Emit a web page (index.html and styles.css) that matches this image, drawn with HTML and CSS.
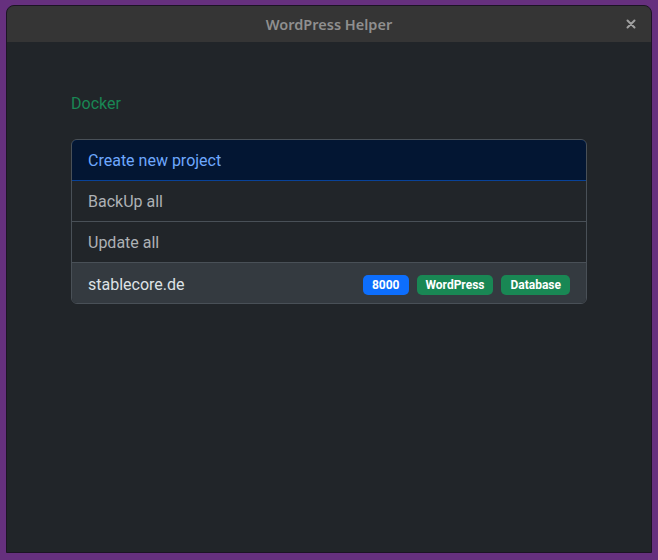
FILE: index.html
```html
<!DOCTYPE html>
<html>
<head>
<meta charset="utf-8">
<link rel="stylesheet" href="styles.css">
</head>
<body>
<div class="window">
  <header class="titlebar">
    <span class="title">WordPress Helper</span>
    <span class="close">
      <svg width="10" height="10" viewBox="0 0 10 10"><path d="M1.5 1.5 L8.5 8.5 M8.5 1.5 L1.5 8.5" stroke="#a0a0a0" stroke-width="2" stroke-linecap="round"/></svg>
    </span>
  </header>
  <main class="content">
    <div class="heading">Docker</div>
    <div class="list">
      <div class="item active">Create new project</div>
      <div class="item muted">BackUp all</div>
      <div class="item muted">Update all</div>
      <div class="item project">
        <span class="name">stablecore.de</span>
        <span class="badges">
          <span class="badge blue">8000</span>
          <span class="badge green">WordPress</span>
          <span class="badge green">Database</span>
        </span>
      </div>
    </div>
  </main>
</div>
</body>
</html>
```

FILE: styles.css
```css
html, body {
  margin: 0;
  padding: 0;
}
body {
  background: #66307e;
  width: 658px;
  height: 560px;
  overflow: hidden;
  font-family: Roboto, "Noto Sans", sans-serif;
}
.window {
  margin: 5px 6px 0 6px;
  width: 644px;
  height: 546px;
  border: 1px solid #1c1424;
  border-radius: 8px 8px 0 0;
  background: #212529;
  display: flex;
  flex-direction: column;
  overflow: hidden;
}
.titlebar {
  height: 36px;
  background: #353535;
  display: flex;
  align-items: center;
  justify-content: center;
  position: relative;
  flex: none;
}
.title {
  font-family: "Noto Sans", sans-serif;
  color: #8f8f8f;
  font-weight: 600;
  font-size: 14.5px;
}
.close {
  position: absolute;
  right: 15px;
  top: 13px;
  display: flex;
}
.content {
  padding: 50px 64px 0 64px;
}
.heading {
  color: #198754;
  font-size: 16px;
  line-height: 24px;
  margin-bottom: 23px;
}
.list {
  border: 1px solid #495057;
  border-radius: 6px;
  overflow: hidden;
}
.item {
  font-size: 16px;
  line-height: 24px;
  padding: 9px 16px 7px 16px;
  color: #dee2e6;
  background: #212529;
}
.item.active {
  background: #031633;
  color: #6ea8fe;
  border: 1px solid #084298;
  margin: -1px -1px 0 -1px;
  border-radius: 6px 6px 0 0;
}
.item.muted {
  color: #adb1b5;
  border-bottom: 1px solid #495057;
}
.item.project {
  background: #343a40;
  display: flex;
  justify-content: space-between;
  align-items: center;
}
.name {
  position: relative;
  top: 1px;
}
.badges {
  display: flex;
  gap: 8px;
  margin-top: 1px;
}
.badge {
  color: #fff;
  font-size: 12px;
  font-weight: 700;
  line-height: 12px;
  padding: 4px 9px;
  border-radius: 5px;
}
.blue { background: #0d6efd; }
.green { background: #198754; }
```
